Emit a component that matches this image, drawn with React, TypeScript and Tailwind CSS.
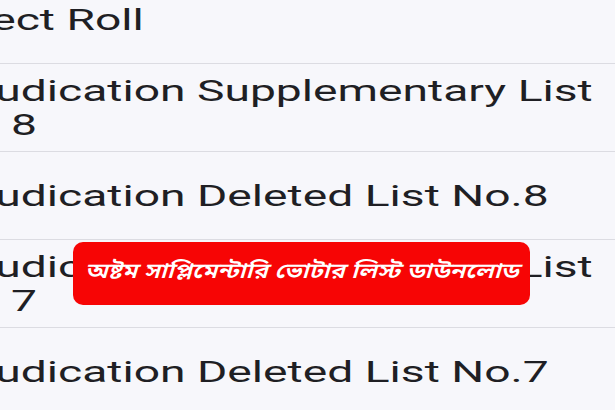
import React from "react";

const rows: string[][] = [
  ["Select Roll"],
  ["Adjudication Supplementary List", "No. 8"],
  ["Adjudication Deleted List No.8"],
  ["Adjudication Supplementary List", "No. 7"],
  ["Adjudication Deleted List No.7"],
];

export default function App() {
  return (
    <div
      className="relative w-[615px] h-[410px] overflow-hidden bg-[#f7f7fb]"
      style={{ fontFamily: "Roboto, 'Noto Sans', sans-serif" }}
    >
      <div className="-mt-[24px] -ml-[72px] w-[720px]">
        {rows.map((lines, i) => (
          <div
            key={i}
            className="h-[88px] flex flex-col justify-center border-b border-[#dcdce2] text-[30px] leading-[34px] text-[#1f1f24]"
          >
            {lines.map((l, j) => (
              <div key={j} className="whitespace-nowrap">
                <span className="inline-block origin-left scale-x-[1.54]">{l}</span>
              </div>
            ))}
          </div>
        ))}
      </div>
      <div className="absolute left-[73px] top-[242px] w-[457px] h-[63px] rounded-[10px] bg-[#f70505] flex items-center justify-center">
        <span
          className="inline-block text-white text-[21px] font-semibold italic scale-x-[1.2]"
          style={{ fontFamily: "'Noto Sans Bengali', 'Noto Serif Bengali', 'Lohit Bengali', 'Noto Sans', sans-serif" }}
        >
          অষ্টম সাপ্লিমেন্টারি ভোটার লিস্ট ডাউনলোড
        </span>
      </div>
    </div>
  );
}
